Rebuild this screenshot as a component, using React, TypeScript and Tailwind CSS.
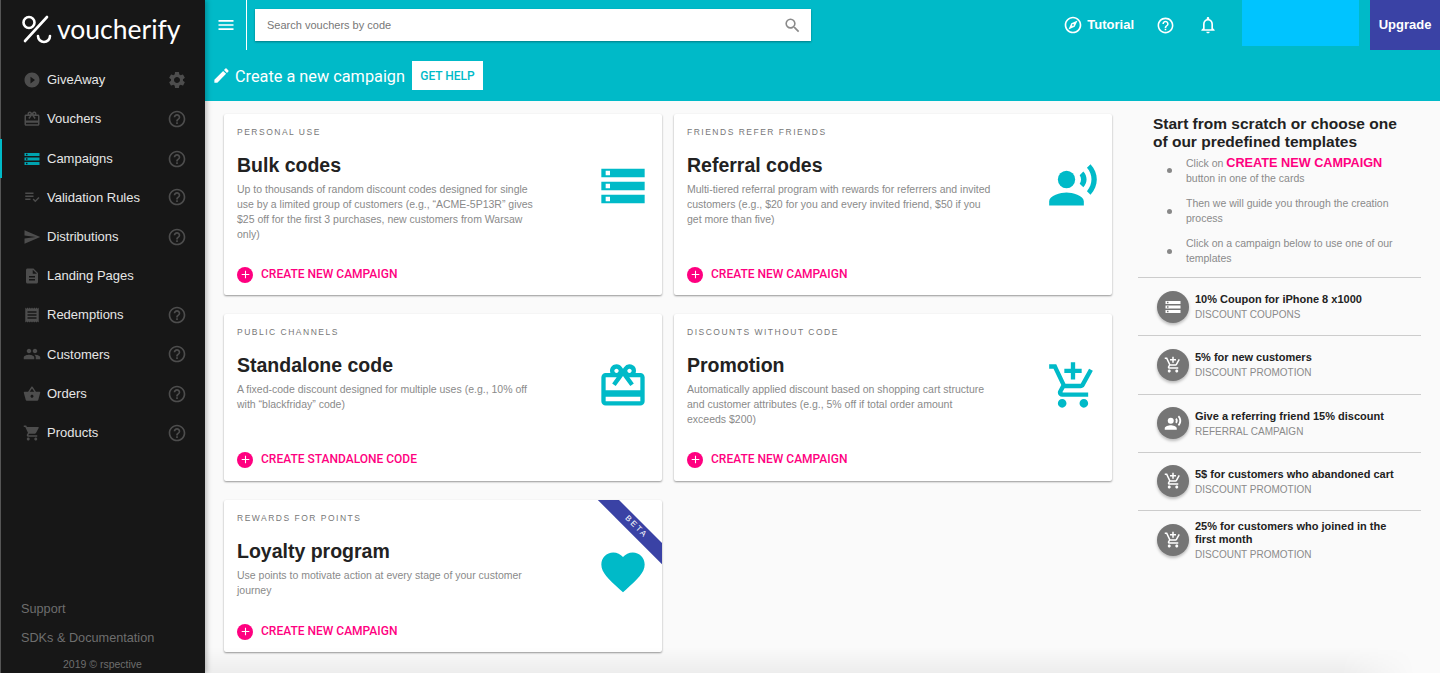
import React from "react";
import {
  MdPlayCircleFilled,
  MdSettings,
  MdHelpOutline,
  MdCardGiftcard,
  MdStorage,
  MdPlaylistAddCheck,
  MdSend,
  MdDescription,
  MdReceipt,
  MdPeople,
  MdShoppingBasket,
  MdShoppingCart,
  MdEdit,
  MdMenu,
  MdSearch,
  MdAddShoppingCart,
  MdFavorite,
  MdAdd,
  MdOutlineExplore,
  MdNotificationsNone,
  MdRecordVoiceOver,
} from "react-icons/md";

const navItems = [
  { label: "GiveAway", icon: MdPlayCircleFilled, side: "gear" },
  { label: "Vouchers", icon: MdCardGiftcard, side: "help" },
  { label: "Campaigns", icon: MdStorage, side: "help", active: true },
  { label: "Validation Rules", icon: MdPlaylistAddCheck, side: "help" },
  { label: "Distributions", icon: MdSend, side: "help" },
  { label: "Landing Pages", icon: MdDescription, side: "" },
  { label: "Redemptions", icon: MdReceipt, side: "help" },
  { label: "Customers", icon: MdPeople, side: "help" },
  { label: "Orders", icon: MdShoppingBasket, side: "help" },
  { label: "Products", icon: MdShoppingCart, side: "help" },
];

const templates = [
  { title: "10% Coupon for iPhone 8 x1000", sub: "DISCOUNT COUPONS", icon: MdStorage },
  { title: "5% for new customers", sub: "DISCOUNT PROMOTION", icon: MdAddShoppingCart },
  { title: "Give a referring friend 15% discount", sub: "REFERRAL CAMPAIGN", icon: MdRecordVoiceOver },
  { title: "5$ for customers who abandoned cart", sub: "DISCOUNT PROMOTION", icon: MdAddShoppingCart },
  { title: "25% for customers who joined in the first month", sub: "DISCOUNT PROMOTION", icon: MdAddShoppingCart },
];

function Sidebar() {
  return (
    <aside className="relative z-10 flex h-full w-[205px] shrink-0 flex-col border-l border-[#555] bg-[#171717] shadow-[2px_0_5px_rgba(0,0,0,0.25)]">
      <div className="flex h-[60px] items-center pl-[21px]">
        <svg width="36" height="30" viewBox="0 0 36 30" fill="none" stroke="#fff" strokeWidth="2.6" strokeLinecap="round" className="shrink-0">
          <circle cx="7" cy="7.5" r="5.5" />
          <path d="M3 26 L25 2" />
          <path d="M16 21 a6 6 0 0 0 12 0" />
        </svg>
        <span className="ml-[-1px] mt-[-2px] font-['Lato'] text-[26.5px] leading-none font-normal text-white">voucherify</span>
      </div>
      <nav className="flex flex-col">
        {navItems.map((item) => {
          const Icon = item.icon;
          return (
            <div
              key={item.label}
              className={
                "relative flex h-[39.25px] items-center pl-[22px] pr-[18px] " + (item.active ? "pt-[1px]" : "")
              }
            >
              {item.active && <span className="absolute left-[-1px] top-0 h-full w-[2px] bg-[#00bac8]" />}
              <Icon size={18} className={item.active ? "text-[#00a3b0]" : "text-[#4d4d4d]"} />
              <span className="ml-[6px] flex-1 text-[13px] text-[#e6e6e6]">{item.label}</span>
              {item.side === "gear" && <MdSettings size={20} className="text-[#4d4d4d]" />}
              {item.side === "help" && <MdHelpOutline size={20} className="text-[#4d4d4d]" />}
            </div>
          );
        })}
      </nav>
      <div className="mt-auto flex flex-col pl-[20px] text-[12.7px] text-[#6e6e6e]">
        <span className="leading-[29px]">Support</span>
        <span className="leading-[29px]">SDKs &amp; Documentation</span>
        <span className="mt-[3px] pl-[42px] text-[10.5px] leading-[17px]">2019 © rspective</span>
      </div>
    </aside>
  );
}

function Header() {
  return (
    <header className="h-[101px] shrink-0 bg-[#00bac8] text-white">
      <div className="flex h-[50px] items-start">
        <div className="flex h-[50px] w-[42px] items-center justify-center border-r border-white pb-[1px]">
          <MdMenu size={20} />
        </div>
        <div className="ml-[8px] mt-[9px] flex h-[32px] w-[556px] items-center justify-between bg-white pl-[12px] pr-[9px] shadow-[0_1px_2px_rgba(0,0,0,0.35)]">
          <span className="text-[11px] text-[#777]">Search vouchers by code</span>
          <MdSearch size={19} className="text-[#8a8a8a]" />
        </div>
        <div className="ml-auto flex h-[50px] items-start">
          <div className="flex h-[50px] items-center">
            <MdOutlineExplore size={20} />
            <span className="ml-[4px] text-[13px] font-bold">Tutorial</span>
            <MdHelpOutline size={19} className="ml-[22px]" />
            <MdNotificationsNone size={20} className="ml-[23px]" />
          </div>
          <div className="ml-[24px] h-[46px] w-[117px] bg-[#00c4ff]" />
          <div className="ml-[11px] flex h-[50px] w-[70px] items-center justify-center bg-[#3a42a5] text-[13px] font-bold">
            Upgrade
          </div>
        </div>
      </div>
      <div className="flex h-[51px] items-center pl-[7px]">
        <MdEdit size={19} />
        <span className="ml-[4px] mt-[3px] w-[171px] whitespace-nowrap font-['Roboto'] text-[16.3px] font-normal">
          Create a new campaign
        </span>
        <span className="ml-[6px] flex h-[29px] w-[71px] items-center justify-center bg-white font-['Roboto'] text-[12px] font-medium text-[#00bac8]">
          GET HELP
        </span>
      </div>
    </header>
  );
}

function CampaignCard(props: {
  kind: string;
  title: string;
  text: React.ReactNode;
  cta: string;
  icon: React.ReactNode;
  beta?: boolean;
  short?: boolean;
}) {
  return (
    <div
      className={
        "relative flex flex-col overflow-hidden rounded-[2px] bg-white pl-[13px] pr-[13px] pt-[12px] shadow-[0_1px_2px_rgba(0,0,0,0.4)] " +
        (props.short ? "pb-[12px]" : "pb-[11px]")
      }
    >
      {props.beta && (
        <div className="absolute right-[-24px] top-[20px] flex h-[14.5px] w-[100px] rotate-45 items-center justify-center bg-[#3a42a5] text-[8px] tracking-[2px] text-white">
          BETA
        </div>
      )}
      <div className="text-[8.5px] leading-[12px] tracking-[1.5px] text-[#777]">{props.kind}</div>
      <div className="mt-[15px] flex justify-between">
        <div className="w-[306px]">
          <h2 className="text-[19.5px] leading-[24px] font-bold text-[#222]">{props.title}</h2>
          <p className="mt-[5px] text-[10.5px] leading-[15px] text-[#8a8a8a]">{props.text}</p>
        </div>
        <div className="mt-[7px] text-[#00bac8]">{props.icon}</div>
      </div>
      <div className="mt-auto flex items-center">
        <span className="flex h-[16px] w-[16px] items-center justify-center rounded-full bg-[#ff0080] text-white">
          <MdAdd size={13} />
        </span>
        <span className="mb-[1px] ml-[8px] font-['Roboto'] text-[12px] font-medium text-[#ff0080]">{props.cta}</span>
      </div>
    </div>
  );
}

function RightPanel() {
  return (
    <section className="ml-[26px] w-[283px] shrink-0 pt-[1px]">
      <h3 className="pl-[15px] text-[15.5px] leading-[18px] font-bold text-[#222]">
        Start from scratch or choose one
        <br />
        of our predefined templates
      </h3>
      <ul className="mt-[5px] flex flex-col gap-[10px] pb-[11px] pl-[48px] text-[10.5px] leading-[15px] text-[#8a8a8a]">
        <li className="relative">
          <span className="absolute left-[-19px] top-[12px] h-[5px] w-[5px] rounded-full bg-[#888]" />
          Click on <span className="text-[12.7px] font-bold text-[#ff0080]">CREATE NEW CAMPAIGN</span>
          <br />
          button in one of the cards
        </li>
        <li className="relative w-[215px]">
          <span className="absolute left-[-19px] top-[13px] h-[5px] w-[5px] rounded-full bg-[#888]" />
          Then we will guide you through the creation process
        </li>
        <li className="relative w-[215px]">
          <span className="absolute left-[-19px] top-[13px] h-[5px] w-[5px] rounded-full bg-[#888]" />
          Click on a campaign below to use one of our templates
        </li>
      </ul>
      {templates.map((t) => {
        const Icon = t.icon;
        return (
          <div key={t.title} className="flex min-h-[58.25px] items-center border-t border-[#ccc] pl-[19px] pr-[25px]">
            <span className="flex h-[32px] w-[32px] shrink-0 items-center justify-center rounded-full bg-[#757575] text-white shadow-[0_2px_3px_rgba(0,0,0,0.25)]">
              <Icon size={18} />
            </span>
            <div className="ml-[6px] mt-[1px] py-[5px]">
              <div className="text-[11px] leading-[13px] font-bold text-[#222]">{t.title}</div>
              <div className="mt-[2px] text-[10px] leading-[13px] text-[#8a8a8a]">{t.sub}</div>
            </div>
          </div>
        );
      })}
    </section>
  );
}

export default function App() {
  return (
    <div className="flex h-[673px] w-[1440px] overflow-hidden bg-[#fafafa] font-['Liberation_Sans',sans-serif]">
      <Sidebar />
      <main className="relative flex min-w-0 flex-1 flex-col">
        <Header />
        <div className="flex pl-[19px] pt-[13px]">
          <div className="grid w-[888px] shrink-0 grid-cols-[438px_438px] grid-rows-[181px_167px_152px] gap-x-[12px] gap-y-[19px]">
            <CampaignCard
              kind="PERSONAL USE"
              title="Bulk codes"
              text="Up to thousands of random discount codes designed for single use by a limited group of customers (e.g., “ACME-5P13R” gives $25 off for the first 3 purchases, new customers from Warsaw only)"
              cta="CREATE NEW CAMPAIGN"
              icon={<MdStorage size={52} />}
            />
            <CampaignCard
              kind="FRIENDS REFER FRIENDS"
              title="Referral codes"
              text="Multi-tiered referral program with rewards for referrers and invited customers (e.g., $20 for you and every invited friend, $50 if you get more than five)"
              cta="CREATE NEW CAMPAIGN"
              icon={<MdRecordVoiceOver size={52} />}
            />
            <CampaignCard
              kind="PUBLIC CHANNELS"
              title="Standalone code"
              text="A fixed-code discount designed for multiple uses (e.g., 10% off with “blackfriday” code)"
              cta="CREATE STANDALONE CODE"
              icon={<MdCardGiftcard size={52} />}
              short
            />
            <CampaignCard
              kind="DISCOUNTS WITHOUT CODE"
              title="Promotion"
              text="Automatically applied discount based on shopping cart structure and customer attributes (e.g., 5% off if total order amount exceeds $200)"
              cta="CREATE NEW CAMPAIGN"
              icon={<MdAddShoppingCart size={52} />}
              short
            />
            <CampaignCard
              kind="REWARDS FOR POINTS"
              title="Loyalty program"
              text="Use points to motivate action at every stage of your customer journey"
              cta="CREATE NEW CAMPAIGN"
              icon={<MdFavorite size={52} />}
              beta
            />
          </div>
          <RightPanel />
        </div>
        {/* faint shadow along the bottom edge */}
        <div className="pointer-events-none absolute bottom-0 left-0 right-0 h-[26px] bg-gradient-to-b from-transparent to-black/5 [mask-image:linear-gradient(to_right,black_92%,transparent_98%)]" />
      </main>
    </div>
  );
}
